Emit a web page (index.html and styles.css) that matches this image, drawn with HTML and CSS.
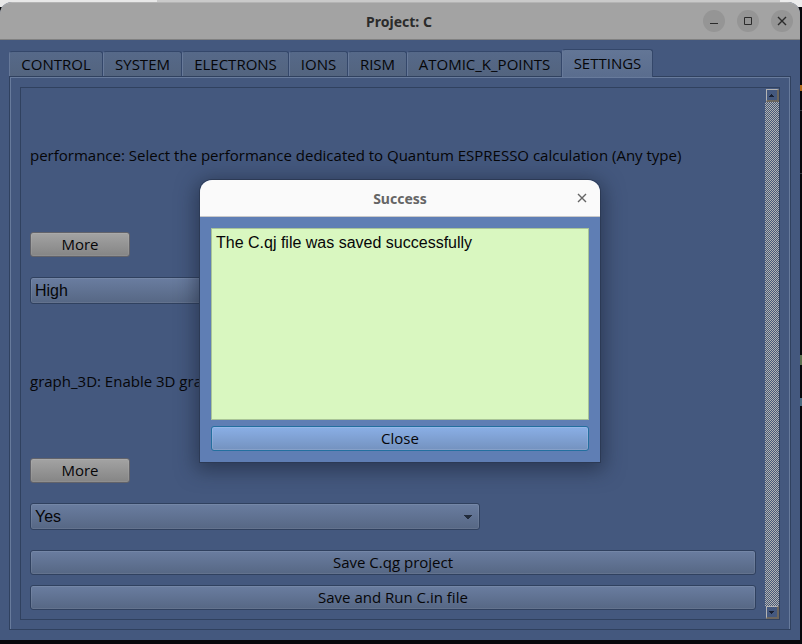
FILE: index.html
```html
<!DOCTYPE html>
<html lang="en">
<head>
<meta charset="utf-8">
<title>Project: C</title>
<link rel="stylesheet" href="styles.css">
</head>
<body>
<div class="window">
  <header class="titlebar">
    <h1 class="title">Project: C</h1>
    <div class="window-controls">
      <button class="control" type="button" aria-label="Minimize"><svg viewBox="0 0 22 22"><path d="M7 13.5h8"/></svg></button>
      <button class="control" type="button" aria-label="Maximize"><svg viewBox="0 0 22 22"><path d="M7.5 7.5h7v7h-7z"/></svg></button>
      <button class="control" type="button" aria-label="Close window"><svg viewBox="0 0 22 22"><path stroke-width="1.4" d="M7 7l8 8M15 7l-8 8"/></svg></button>
    </div>
  </header>
  <main class="content">
    <div class="tabs" role="tablist">
      <button class="tab" type="button" role="tab">CONTROL</button>
      <button class="tab" type="button" role="tab">SYSTEM</button>
      <button class="tab" type="button" role="tab">ELECTRONS</button>
      <button class="tab" type="button" role="tab">IONS</button>
      <button class="tab" type="button" role="tab">RISM</button>
      <button class="tab" type="button" role="tab">ATOMIC_K_POINTS</button>
      <button class="tab tab-active" type="button" role="tab" aria-selected="true">SETTINGS</button>
    </div>
    <section class="panel">
      <div class="scroll-frame">
        <form class="settings">
          <label class="caption" for="performance">performance: Select the performance dedicated to Quantum ESPRESSO calculation (Any type)</label>
          <button class="button button-more" type="button">More</button>
          <select class="select" id="performance"><option>High</option></select>
          <label class="caption" for="graph">graph_3D: Enable 3D graph</label>
          <button class="button button-more" type="button">More</button>
          <select class="select" id="graph"><option>Yes</option></select>
          <div class="actions">
            <button class="button" type="button">Save C.qg project</button>
            <button class="button" type="button">Save and Run C.in file</button>
          </div>
        </form>
        <div class="scrollbar">
          <button class="arrow" type="button" aria-label="Scroll up"><svg viewBox="0 0 9 9"><path d="M4 3h1v1h1v1h1v1H2V5h1V4h1z"/></svg></button>
          <div class="track"></div>
          <button class="arrow" type="button" aria-label="Scroll down"><svg viewBox="0 0 9 9"><path d="M2 3h5v1H6v1H5v1H4V5H3V4H2z"/></svg></button>
        </div>
      </div>
    </section>
  </main>
  <div class="overlay">
    <div class="dialog" role="dialog" aria-labelledby="dialog-title">
      <header class="dialog-header">
        <h2 class="dialog-title" id="dialog-title">Success</h2>
        <button class="dialog-x" type="button" aria-label="Close dialog"><svg viewBox="0 0 10 10"><path stroke-width="1.4" d="M1 1l8 8M9 1l-8 8"/></svg></button>
      </header>
      <div class="dialog-body">
        <textarea class="message" readonly aria-label="Message">The C.qj file was saved successfully</textarea>
        <button class="button button-close" type="button">Close</button>
      </div>
    </div>
  </div>
</div>
</body>
</html>
```
FILE: styles.css
```css
* { box-sizing: border-box; }

body {
  margin: 0;
  min-height: 100vh;
  padding: 2px 2px 4px 0;
  display: flex;
  font: 15px/18px "Open Sans", "Noto Sans", sans-serif;
  color: #060608;
  background:
    linear-gradient(#b06a1c, #b06a1c) right 85px / 2px 6px no-repeat,
    linear-gradient(#33383e, #33383e) right 110px / 2px 1px no-repeat,
    linear-gradient(#33383e, #33383e) right 173px / 2px 1px no-repeat,
    linear-gradient(#5c7050, #5c7050) right 355px / 2px 10px no-repeat,
    linear-gradient(#4a6a80, #4a6a80) right 398px / 2px 8px no-repeat,
    linear-gradient(90deg, #e8e8e8 157px, #cacaca 157px, #cacaca 780px, #ececec 780px) top / 100% 7px no-repeat,
    #07080c;
}

button, select, textarea {
  font: inherit;
  color: inherit;
  margin: 0;
  padding: 0;
}

svg { display: block; fill: none; stroke: currentColor; }

.window {
  position: relative;
  flex: 1;
  display: flex;
  flex-direction: column;
  background: #44587e;
  border-radius: 12px 12px 0 0;
}

.titlebar {
  display: grid;
  grid-template-columns: 1fr auto 1fr;
  align-items: center;
  height: 38px;
  padding: 0 7px 0 5px;
  color: #2b2b2b;
  background: #a3a3a3;
  border-top: 1px solid #b4b4b4;
  border-bottom: 1px solid #818181;
  border-radius: 12px 12px 0 0;
}

.title, .dialog-title {
  grid-column: 2;
  margin: 0;
  padding-top: 2px;
  font-family: "Noto Sans", sans-serif;
  font-size: 14px;
  line-height: 18px;
}

.window-controls { display: flex; justify-content: flex-end; gap: 12px; }

.control {
  width: 22px;
  height: 22px;
  border: 0;
  border-radius: 50%;
  background: #959595;
}

.content {
  flex: 1;
  display: flex;
  flex-direction: column;
  padding: 9px 9px 10px;
}

.tabs {
  display: grid;
  grid-template-columns: 94px 79px 107px 59px 59px 155px 91px;
  align-items: end;
  height: 28px;
  margin-bottom: -1px;
  z-index: 1;
}

.tab {
  height: 25px;
  margin-bottom: 1px;
  white-space: nowrap;
  background: linear-gradient(#566989, #53647f);
  border: 1px solid #34476a;
  border-bottom: 0;
  border-left-color: #677999;
  border-radius: 3px 3px 0 0;
}

.tab-active {
  height: 28px;
  margin-bottom: 0;
  padding-bottom: 2px;
  background: linear-gradient(#637696, #5a6d8e);
}

.panel {
  flex: 1;
  display: flex;
  padding: 10px 10px 9px;
  border: 1px solid #30415f;
  box-shadow: inset 1px 1px #687b9c, inset -1px 0 #687b9c;
}

.scroll-frame {
  flex: 1;
  display: flex;
  border: 1px solid #30415f;
}

.settings {
  flex: 1;
  display: flex;
  flex-direction: column;
  align-items: flex-start;
  gap: 20px;
  padding: 10px 9px 9px;
}

.caption {
  flex: 1;
  display: flex;
  align-items: center;
  white-space: nowrap;
}

.button {
  height: 25px;
  padding-bottom: 2px;
  background: linear-gradient(#6a7da0, #566784);
  border: 1px solid #30415f;
  border-radius: 3px;
  box-shadow: inset 0 0 0 1px #ffffff14;
}

.button-more {
  width: 100px;
  background: linear-gradient(#a3a3a3, #858585);
  border-color: #62636a;
}

.select {
  appearance: none;
  width: 450px;
  height: 27px;
  padding-left: 4px;
  font: 16px/20px "Liberation Sans", sans-serif;
  background:
    linear-gradient(#222c3c, #222c3c) right 7px top 11px / 8px 1px no-repeat,
    linear-gradient(#222c3c, #222c3c) right 8px top 12px / 6px 1px no-repeat,
    linear-gradient(#222c3c, #222c3c) right 9px top 13px / 4px 1px no-repeat,
    linear-gradient(#222c3c, #222c3c) right 10px top 14px / 2px 1px no-repeat,
    linear-gradient(#6a7da0, #566784);
  border: 1px solid #30415f;
  border-radius: 3px;
  box-shadow: inset 0 0 0 1px #ffffff14;
}

.actions { align-self: stretch; display: grid; gap: 10px; }

.scrollbar {
  width: 14px;
  display: flex;
  flex-direction: column;
  padding-top: 1px;
}

.arrow {
  width: 13px;
  height: 13px;
  margin-left: 1px;
  background: #44587e;
  border: 1px solid #b4b4b4;
  border-right: 2px solid #6b665f;
  border-bottom: 2px solid #6b665f;
}

.arrow svg { width: 9px; height: 9px; fill: #182033; stroke: none; }

.track {
  flex: 1;
  background: repeating-conic-gradient(#b4b4b0 0 25%, #46587a 0 50%) 0 0 / 2px 2px;
}

.overlay {
  position: absolute;
  inset: 0;
  z-index: 2;
  display: grid;
  place-items: center;
}

.dialog {
  width: 400px;
  background: #5f7eb4;
  border-radius: 12px 12px 0 0;
  box-shadow: 0 0 0 1px #2c3a55, 0 4px 20px 4px #1a243899;
}

.dialog-header {
  display: grid;
  grid-template-columns: 1fr auto 1fr;
  align-items: center;
  height: 37px;
  padding: 0 13px;
  color: #656565;
  background: #fafafa;
  border-bottom: 1px solid #c9c9c9;
  border-radius: 12px 12px 0 0;
}

.dialog-x {
  justify-self: end;
  width: 10px;
  height: 10px;
  border: 0;
  background: none;
}

.dialog-body { display: grid; gap: 6px; padding: 11px; }

.message {
  display: block;
  width: 100%;
  height: 192px;
  padding: 4px;
  resize: none;
  outline: 0;
  font: 16px/20px "Liberation Sans", sans-serif;
  background: #d9f7c0;
  border: 1px solid #a9c497;
}

.button-close {
  background: linear-gradient(#8aafe6, #7492bf);
  border-color: #236f9f;
  box-shadow: inset 0 0 0 1px #ffffff20;
}
```
